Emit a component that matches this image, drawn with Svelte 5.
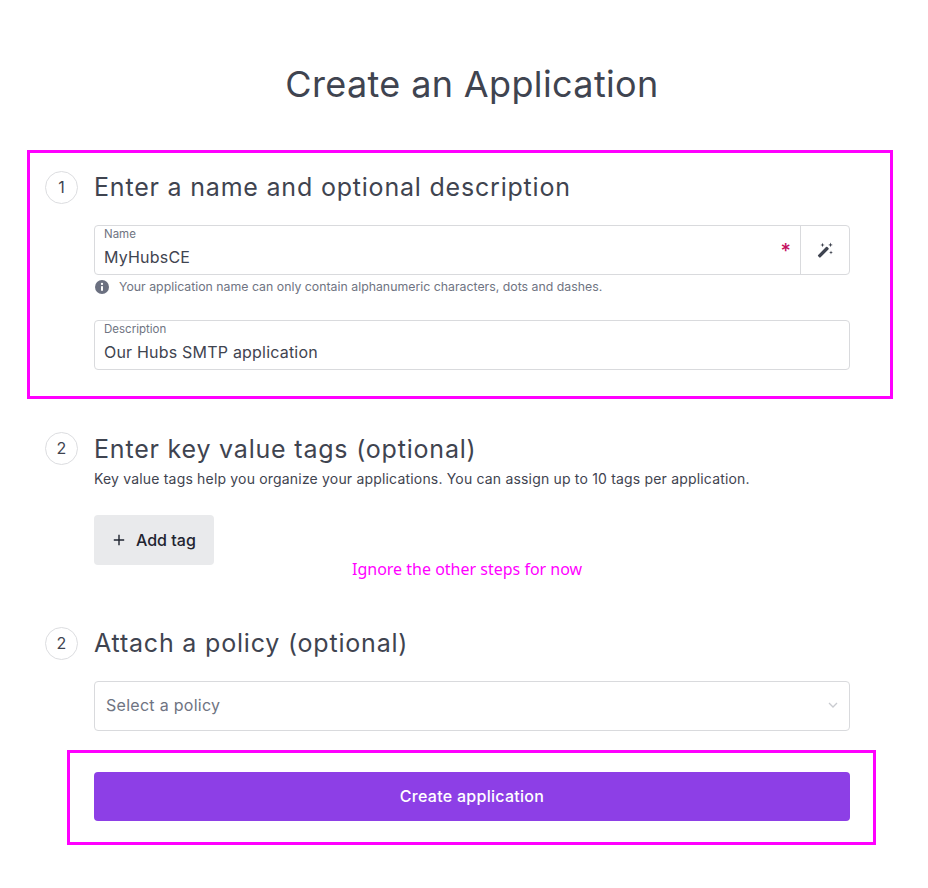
<script>
  let name = $state('MyHubsCE');
  let description = $state('Our Hubs SMTP application');
</script>

<main class="page">
  <h1>Create an Application</h1>

  <section class="step first">
    <span class="num">1</span>
    <div class="body">
      <h2>Enter a name and optional description</h2>
      <div class="field name-field">
        <label class="input">
          <span class="label">Name</span>
          <input bind:value={name} />
          <span class="req">*</span>
        </label>
        <button class="wand" aria-label="Generate name">
          <svg width="16" height="16" viewBox="0 0 16 16">
            <path d="M1.2 12.9 9 5.1a1 1 0 0 1 1.4 0l1 1a1 1 0 0 1 0 1.4l-7.8 7.8a1 1 0 0 1-1.4 0l-1-1a1 1 0 0 1 0-1.4Z" fill="#3f4450"/>
            <path d="M5.5.8 6.1 2.4l1.6.6-1.6.6-.6 1.6-.6-1.6-1.6-.6 1.6-.6ZM13.5.6l.6 1.7 1.7.6-1.7.6-.6 1.7-.6-1.7-1.7-.6 1.7-.6ZM14 8.6l.5 1.4 1.4.5-1.4.5-.5 1.4-.5-1.4-1.4-.5 1.4-.5Z" fill="#3f4450"/>
          </svg>
        </button>
      </div>
      <p class="help">
        <svg width="14" height="14" viewBox="0 0 14 14">
          <circle cx="7" cy="7" r="7" fill="#6b7080"/>
          <rect x="6" y="6" width="2" height="4.8" rx=".4" fill="#fff"/>
          <circle cx="7" cy="3.9" r="1.15" fill="#fff"/>
        </svg>
        Your application name can only contain alphanumeric characters, dots and dashes.
      </p>
      <div class="field desc-field">
        <label class="input">
          <span class="label">Description</span>
          <input bind:value={description} />
        </label>
      </div>
    </div>
    <div class="mark"></div>
  </section>

  <section class="step second">
    <span class="num">2</span>
    <div class="body">
      <h2>Enter key value tags (optional)</h2>
      <p class="sub">Key value tags help you organize your applications. You can assign up to 10 tags per application.</p>
      <button class="add">
        <svg width="12" height="12" viewBox="0 0 12 12"><path d="M6 .8v10.4M.8 6h10.4" stroke="#1f2430" stroke-width="1.4" fill="none"/></svg>
        Add tag
      </button>
    </div>
    <p class="note">Ignore the other steps for now</p>
  </section>

  <section class="step third">
    <span class="num">2</span>
    <div class="body">
      <h2>Attach a policy (optional)</h2>
      <div class="select">
        <span>Select a policy</span>
        <svg width="10" height="6" viewBox="0 0 10 6"><path d="M1 1l4 4 4-4" stroke="#c9cbd0" stroke-width="1.3" fill="none"/></svg>
      </div>
    </div>
  </section>

  <div class="submit-row">
    <button class="submit">Create application</button>
    <div class="mark"></div>
  </div>
</main>

<style>
  :global(body) {
    background: #fff;
    font-family: Inter, "Liberation Sans", sans-serif;
    color: #3f4450;
  }

  .page {
    box-sizing: border-box;
    width: 928px;
    height: 888px;
    padding: 60px 29px 0 45px;
    overflow: hidden;
  }

  h1 {
    margin: 0 0 0 49px;
    width: 756px;
    text-align: center;
    font-size: 36px;
    line-height: 48px;
    font-weight: 400;
    letter-spacing: 0.36px;
    color: #3f4450;
  }

  .step {
    position: relative;
    display: flex;
    gap: 16px;
  }

  .first { margin-top: 63px; }
  .second { margin-top: 62px; }
  .third { margin-top: 62px; }

  .num {
    flex: none;
    box-sizing: border-box;
    width: 33px;
    height: 33px;
    border: 1px solid #dcdde0;
    border-radius: 50%;
    text-align: center;
    font-size: 16px;
    line-height: 31px;
    color: #3f4450;
  }

  .body { width: 756px; }
  .second .body { padding-top: 1px; }

  h2 {
    margin: 0;
    font-size: 25px;
    line-height: 33px;
    font-weight: 400;
    letter-spacing: 0.8px;
    color: #3f4450;
  }

  .field {
    display: flex;
    box-sizing: border-box;
    height: 50px;
    border: 1px solid #d9dadd;
    border-radius: 4px;
  }

  .name-field { margin-top: 21px; }
  .desc-field { margin-top: 26px; }

  .input {
    position: relative;
    flex: 1;
    display: block;
    padding: 0 9px;
  }

  .label {
    display: block;
    padding-top: 2px;
    font-size: 11.5px;
    line-height: 13px;
    color: #6f7482;
  }

  input {
    display: block;
    width: 100%;
    margin-top: 4px;
    padding: 0;
    border: 0;
    outline: 0;
    background: none;
    font: 16px/24px Inter, "Liberation Sans", sans-serif;
    letter-spacing: 0.2px;
    color: #3f4450;
  }

  .req {
    position: absolute;
    top: 13px;
    right: 9px;
    font-size: 20px;
    font-weight: 500;
    line-height: 24px;
    color: #c4105f;
  }

  .wand {
    flex: none;
    width: 49px;
    display: flex;
    align-items: center;
    justify-content: center;
    padding: 0;
    border: 0;
    border-left: 1px solid #d9dadd;
    background: none;
  }

  .help {
    display: flex;
    align-items: center;
    gap: 10px;
    margin: 5px 0 0 1px;
    font-size: 12.32px;
    line-height: 14px;
    color: #6f7482;
  }

  .sub {
    margin: 3px 0 0;
    font-size: 14px;
    line-height: 20px;
    letter-spacing: 0.18px;
    color: #3f4450;
  }

  .add {
    display: flex;
    align-items: center;
    gap: 11px;
    width: 120px;
    height: 50px;
    margin-top: 26px;
    padding: 0 0 0 19px;
    border: 0;
    border-radius: 4px;
    background: #e9eaec;
    font: 500 16px Inter, "Liberation Sans", sans-serif;
    color: #1f2430;
  }

  .select {
    display: flex;
    align-items: center;
    justify-content: space-between;
    box-sizing: border-box;
    height: 50px;
    margin-top: 21px;
    padding: 0 11px 2px;
    border: 1px solid #d9dadd;
    border-radius: 4px;
    font-size: 16px;
    letter-spacing: 0.28px;
    color: #6f7482;
  }

  .submit-row {
    position: relative;
    margin: 41px 0 0 49px;
    width: 756px;
  }

  .submit {
    display: block;
    width: 100%;
    height: 49px;
    padding: 0 0 2px;
    border: 0;
    border-radius: 4px;
    background: #8d3fe6;
    font: 500 16px Inter, "Liberation Sans", sans-serif;
    letter-spacing: 0.28px;
    color: #fff;
  }

  /* magenta review annotations drawn over the form */
  .mark {
    position: absolute;
    box-sizing: border-box;
    border: 3px solid #ff00ff;
    pointer-events: none;
  }

  .first .mark {
    left: -18px;
    top: -21px;
    width: 866px;
    height: 249px;
  }

  .submit-row .mark {
    left: -27px;
    top: -22px;
    width: 809px;
    height: 95px;
  }

  .note {
    position: absolute;
    left: 307px;
    top: 126px;
    margin: 0;
    font: 16px/22px "Noto Sans", sans-serif;
    color: #ff00ff;
  }
</style>
